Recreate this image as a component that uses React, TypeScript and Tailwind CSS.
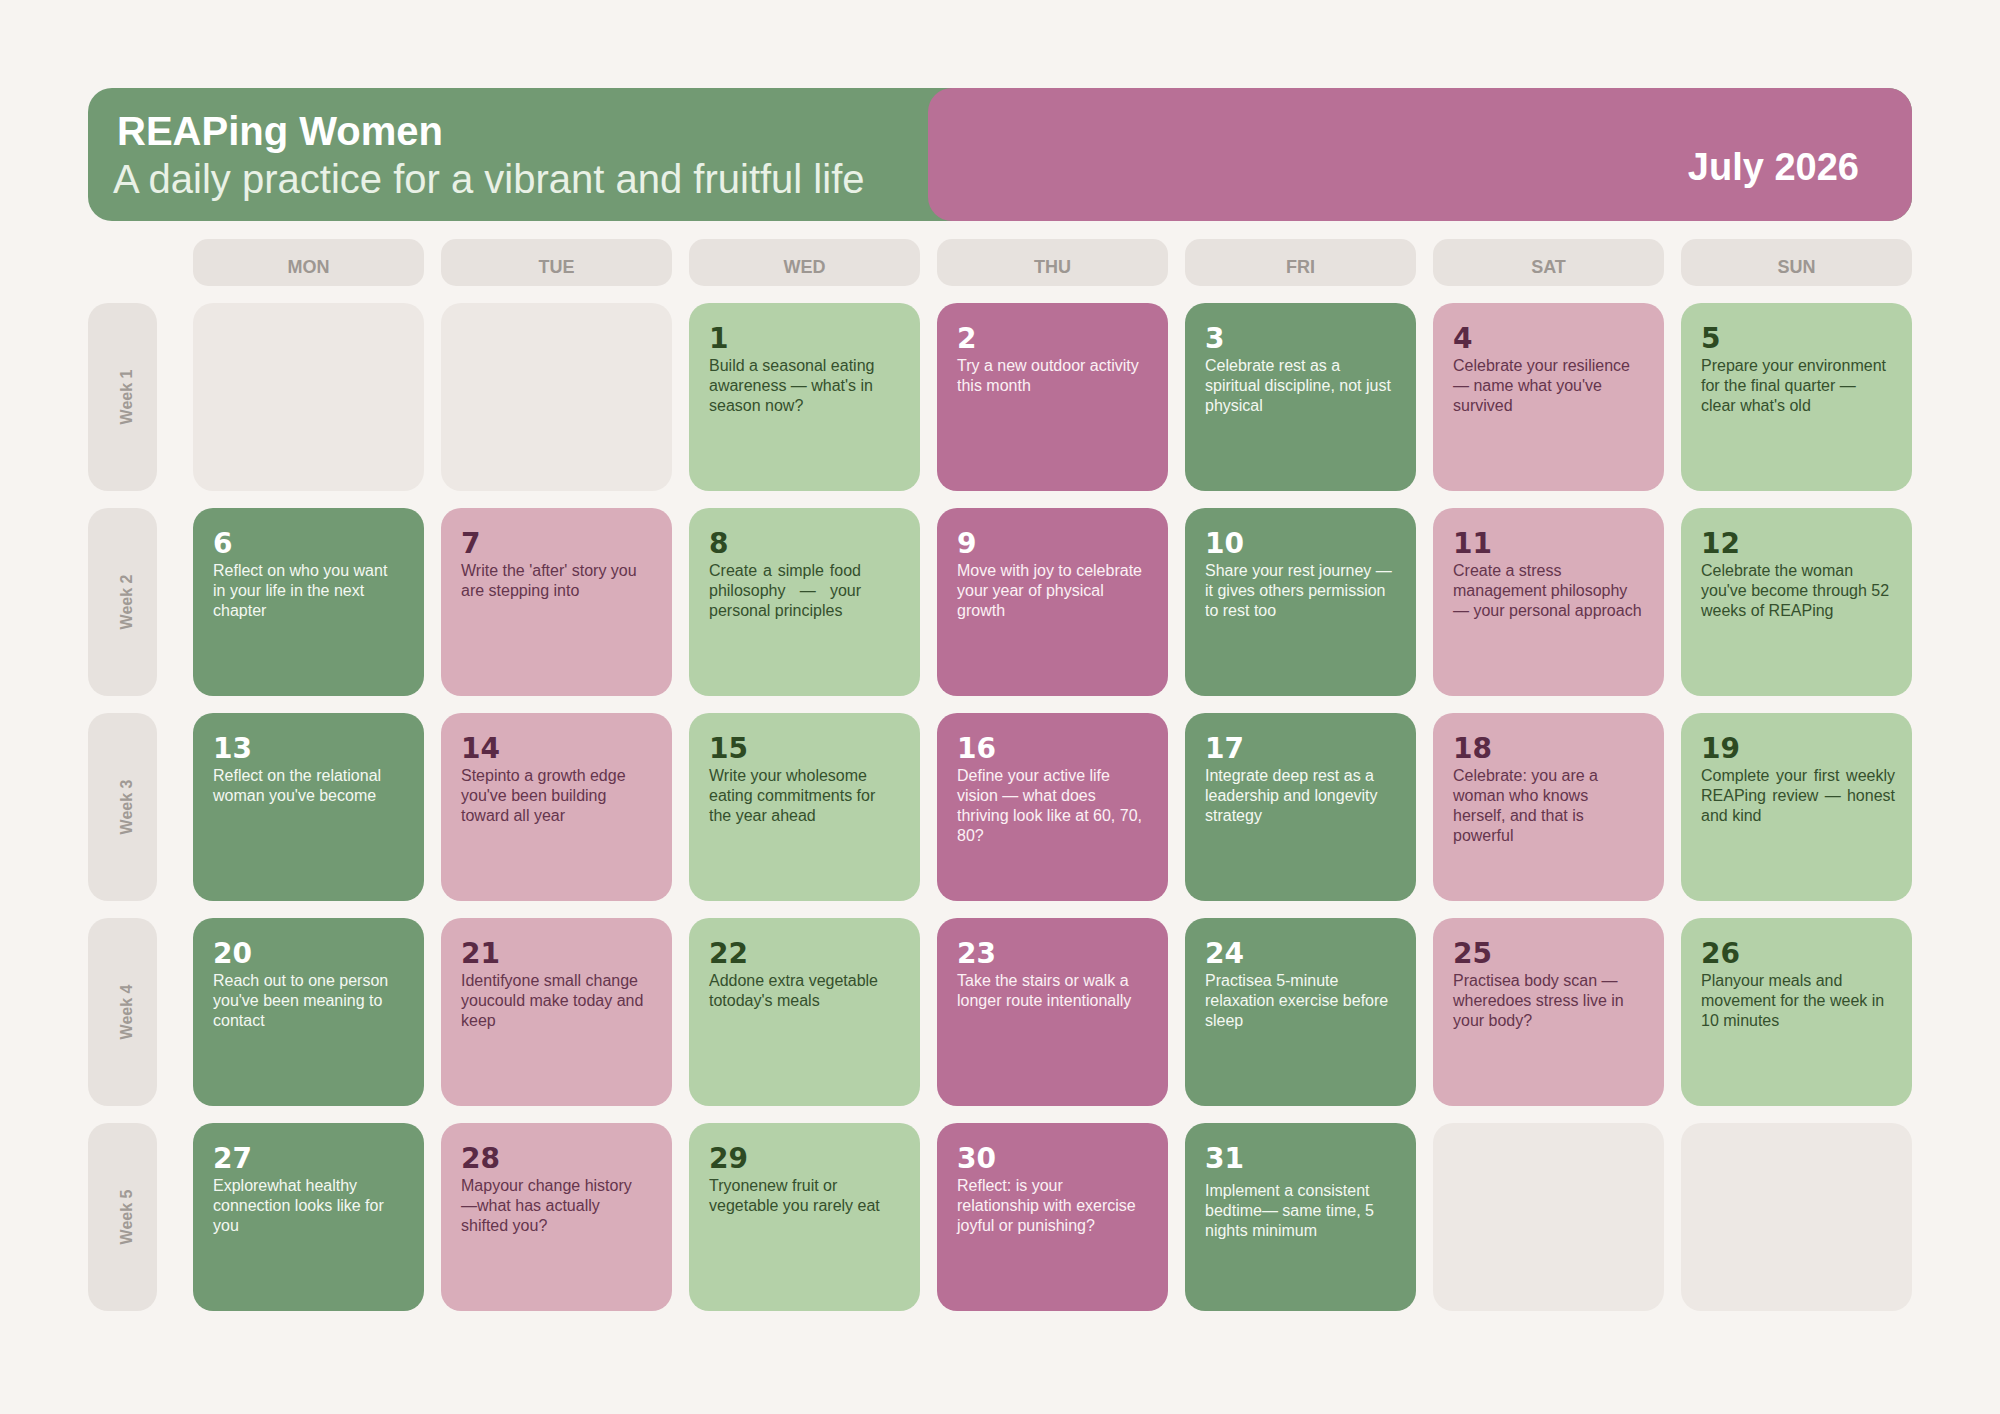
import React from "react"

type Kind = "sage" | "plum" | "rose" | "mint" | "empty"

const kindStyles: Record<Kind, { box: string; num: string; text: string }> = {
  sage: { box: "bg-[#729a73]", num: "text-white", text: "text-[#f4f8f2]" },
  plum: { box: "bg-[#b87096]", num: "text-white", text: "text-[#fcf0f5]" },
  rose: { box: "bg-[#d9adba]", num: "text-[#5a2a45]", text: "text-[#65354d]" },
  mint: { box: "bg-[#b4d1a8]", num: "text-[#2d4a22]", text: "text-[#34502d]" },
  empty: { box: "bg-[#ede8e4]", num: "", text: "" },
}

// column colours, MON -> SUN
const columnKinds: Kind[] = ["sage", "rose", "mint", "plum", "sage", "rose", "mint"]

const days = ["MON", "TUE", "WED", "THU", "FRI", "SAT", "SUN"]

type Entry = { day: number; text: string; extra?: string } | null

const weeks: Entry[][] = [
  [
    null,
    null,
    { day: 1, text: "Build a seasonal eating awareness — what's in season now?" },
    { day: 2, text: "Try a new outdoor activity this month" },
    { day: 3, text: "Celebrate rest as a spiritual discipline, not just physical" },
    { day: 4, text: "Celebrate your resilience — name what you've survived" },
    { day: 5, text: "Prepare your environment for the final quarter — clear what's old" },
  ],
  [
    { day: 6, text: "Reflect on who you want in your life in the next chapter" },
    { day: 7, text: "Write the 'after' story you are stepping into" },
    { day: 8, text: "Create a simple food philosophy — your personal principles", extra: "w-[152px] text-justify" },
    { day: 9, text: "Move with joy to celebrate your year of physical growth" },
    { day: 10, text: "Share your rest journey — it gives others permission to rest too" },
    { day: 11, text: "Create a stress management philosophy — your personal approach" },
    { day: 12, text: "Celebrate the woman you've become through 52 weeks of REAPing" },
  ],
  [
    { day: 13, text: "Reflect on the relational woman you've become" },
    { day: 14, text: "Stepinto a growth edge you've been building toward all year" },
    { day: 15, text: "Write your wholesome eating commitments for the year ahead" },
    { day: 16, text: "Define your active life vision — what does thriving look like at 60, 70, 80?" },
    { day: 17, text: "Integrate deep rest as a leadership and longevity strategy" },
    { day: 18, text: "Celebrate: you are a woman who knows herself, and that is powerful" },
    { day: 19, text: "Complete your first weekly REAPing review — honest and kind", extra: "-mr-[4px] text-justify" },
  ],
  [
    { day: 20, text: "Reach out to one person you've been meaning to contact" },
    { day: 21, text: "Identifyone small change youcould make today and keep" },
    { day: 22, text: "Addone extra vegetable totoday's meals" },
    { day: 23, text: "Take the stairs or walk a longer route intentionally" },
    { day: 24, text: "Practisea 5-minute relaxation exercise before sleep" },
    { day: 25, text: "Practisea body scan — wheredoes stress live in your body?" },
    { day: 26, text: "Planyour meals and movement for the week in 10 minutes" },
  ],
  [
    { day: 27, text: "Explorewhat healthy connection looks like for you" },
    { day: 28, text: "Mapyour change history —what has actually shifted you?" },
    { day: 29, text: "Tryonenew fruit or vegetable you rarely eat" },
    { day: 30, text: "Reflect: is your relationship with exercise joyful or punishing?" },
    { day: 31, text: "Implement a consistent bedtime— same time, 5 nights minimum", extra: "mt-[8px]" },
    null,
    null,
  ],
]

function DayCell({ entry, kind }: { entry: Entry; kind: Kind }) {
  if (!entry) {
    return <div className="h-[188px] rounded-[20px] bg-[#ede8e4]" />
  }
  const s = kindStyles[kind]
  return (
    <div className={`h-[188px] rounded-[20px] pt-[22px] pl-[20px] pr-[21px] ${s.box}`}>
      <div className={`font-['DejaVu_Sans',sans-serif] text-[28px] font-bold leading-none ${s.num}`}>
        {entry.day}
      </div>
      <p className={`mt-[3px] text-[16px] leading-[20px] ${s.text} ${entry.extra ?? ""}`}>{entry.text}</p>
    </div>
  )
}

export default function App() {
  return (
    <div className="min-h-screen bg-[#f7f4f1] px-[88px] pt-[88px] pb-[100px] font-['Liberation_Sans',Arial,sans-serif]">
      {/* Header */}
      <div className="flex h-[133px] rounded-[24px] bg-[#729a73]">
        <div className="w-[840px] pl-[25px] pt-[19px] leading-[48px]">
          <h1 className="ml-[4px] text-[40px] font-bold text-white">REAPing Women</h1>
          <p className="text-[40px] text-[#e9f1e6]">A daily practice for a vibrant and fruitful life</p>
        </div>
        <div className="flex flex-1 items-end justify-end rounded-[24px] bg-[#b87096] pr-[53px] pb-[32px]">
          <span className="text-[38px] font-bold leading-[44px] text-white">July 2026</span>
        </div>
      </div>

      {/* Weekday headings */}
      <div className="mt-[18px] flex gap-[36px]">
        <div className="w-[69px] shrink-0" />
        <div className="grid flex-1 grid-cols-7 gap-[17px]">
          {days.map((d) => (
            <div
              key={d}
              className="flex h-[47px] items-center justify-center rounded-[15px] bg-[#e7e2de] pt-[10px] text-[18px] font-bold text-[#9d9792]"
            >
              {d}
            </div>
          ))}
        </div>
      </div>

      {/* Weeks */}
      <div className="mt-[17px] flex flex-col gap-[17px]">
        {weeks.map((week, wi) => (
          <div key={wi} className="flex gap-[36px]">
            <div className="flex h-[188px] w-[69px] shrink-0 items-center justify-center rounded-[20px] bg-[#e7e2de] pl-[9px]">
              <span className="-rotate-90 whitespace-nowrap text-[16px] font-bold text-[#a09a95]">Week {wi + 1}</span>
            </div>
            <div className="grid flex-1 grid-cols-7 gap-[17px]">
              {week.map((entry, di) => (
                <DayCell key={di} entry={entry} kind={columnKinds[di]} />
              ))}
            </div>
          </div>
        ))}
      </div>
    </div>
  )
}
